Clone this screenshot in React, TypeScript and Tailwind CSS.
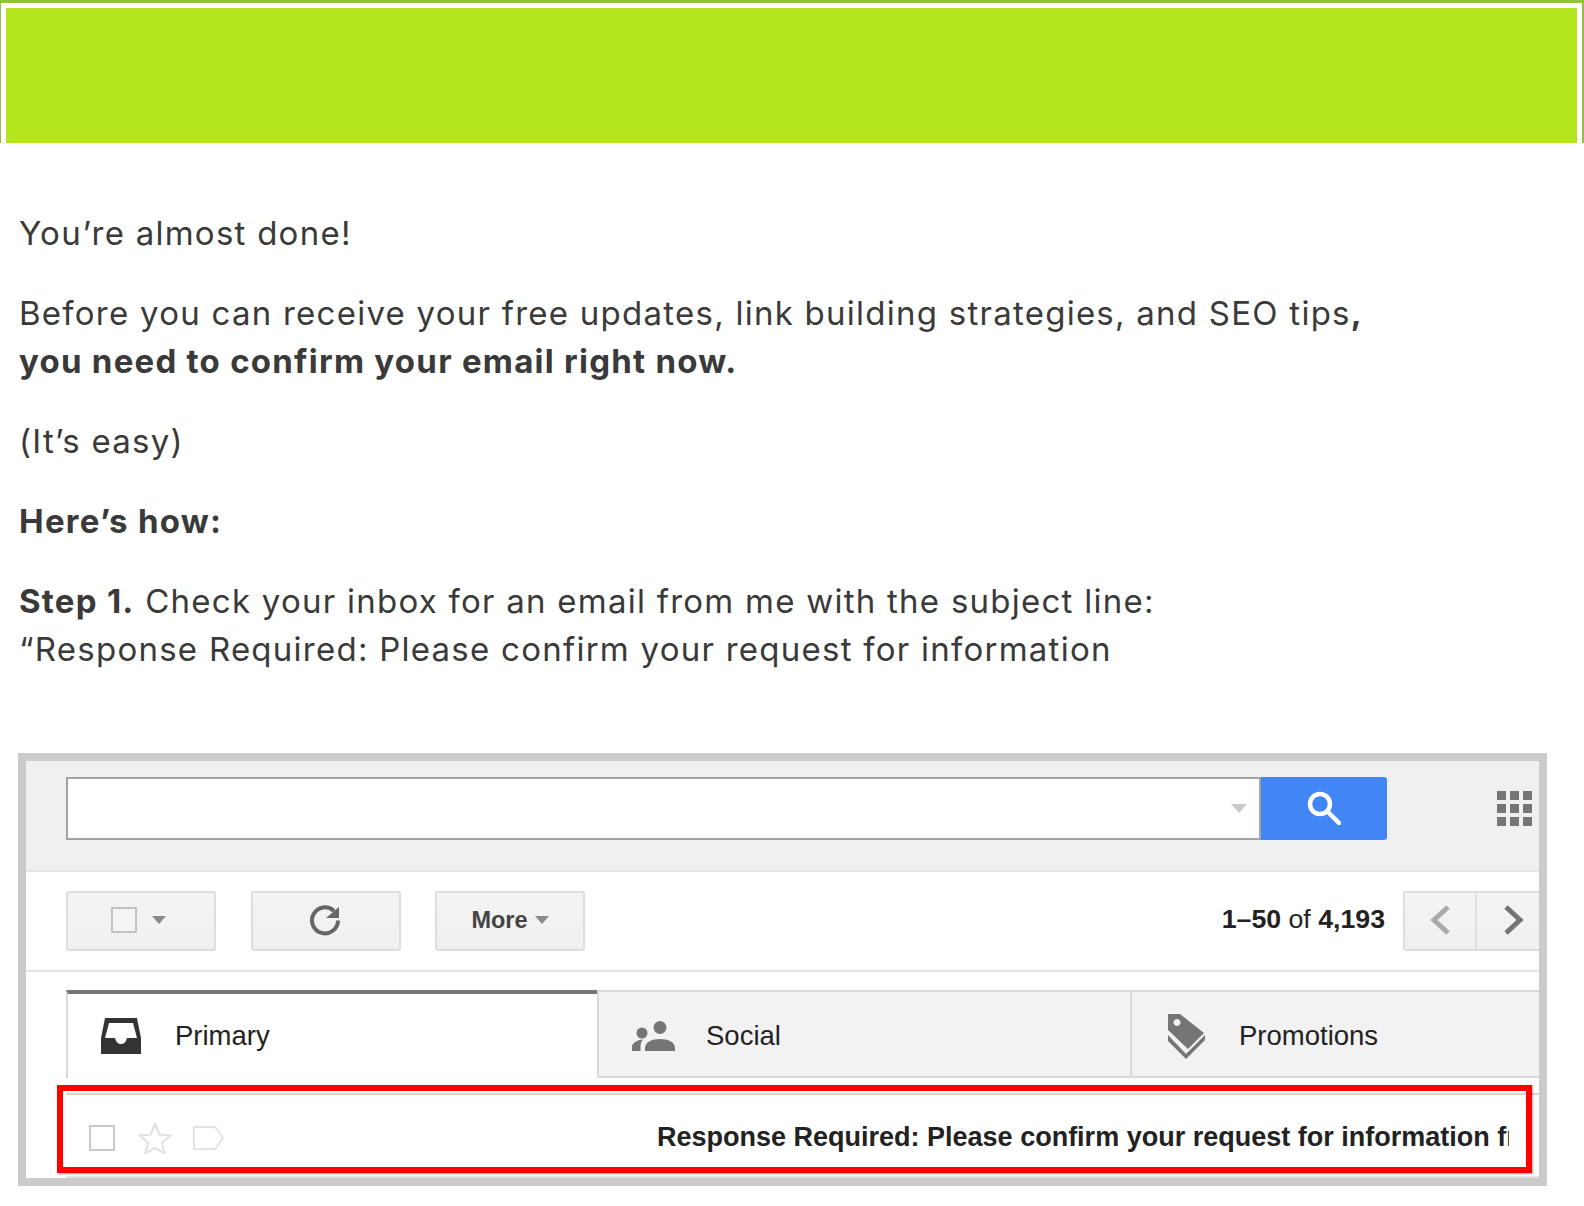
const textFont = "font-['Inter',sans-serif]";
const gmailFont = "font-['Liberation_Sans',Arial,sans-serif]";

function Caret({ className, small }: { className: string; small?: boolean }) {
  return (
    <svg className={className} width={small ? 14 : 16} height={small ? 8 : 9} viewBox="0 0 16 9">
      <path d="M0 0h16L8 9z" fill="currentColor" />
    </svg>
  );
}

function ToolButton({ children, className }: { children: React.ReactNode; className: string }) {
  return (
    <div
      className={`flex h-[60px] w-[150px] items-center justify-center rounded-[3px] border-2 border-[#dedede] bg-gradient-to-b from-[#f4f4f4] to-[#f0f0f0] ${className}`}
    >
      {children}
    </div>
  );
}

function InboxIcon() {
  return (
    <svg width="40" height="36" viewBox="0 0 40 36" className="shrink-0">
      <path
        fillRule="evenodd"
        fill="#333"
        d="M4 0h32l4 20v16H0V20zM8 5 4 20h10c1 4 3 6 6 6s5-2 6-6h10L32 5z"
      />
    </svg>
  );
}

function SocialIcon() {
  return (
    <svg width="44" height="30" viewBox="0 0 44 30" className="shrink-0" fill="#757575">
      <circle cx="28" cy="6.500" r="6.500" />
      <circle cx="10" cy="12" r="5.500" />
      <path d="M13 30v-3c0-6 7-9 15-9s15 3 15 9v3z" />
      <path d="M0 30v-4c0-4 5-7 11-7.500-1.500 2-2.500 4-2.500 7V30z" />
    </svg>
  );
}

function TagIcon() {
  return (
    <svg width="37" height="46" viewBox="0 0 37 46" className="shrink-0" fill="#757575">
      <path
        fillRule="evenodd"
        d="M0 1h12l24 19-16 16L0 17zM9 6a3.500 3.500 0 1 0 .01 0z"
      />
      <path d="M0 22v6l18 18 19-19v-5L18 41z" />
    </svg>
  );
}

function Tab({
  label,
  icon,
  className,
  gap,
}: {
  label: string;
  icon: React.ReactNode;
  className: string;
  gap: string;
}) {
  return (
    <div className={`flex h-[88px] items-center ${gap} ${className}`}>
      {icon}
      <span className="text-[27.500px] text-[#222]">{label}</span>
    </div>
  );
}

export default function App() {
  return (
    <div className="min-h-[1206px] w-[1584px] bg-white">
      {/* header banner */}
      <div className="border-t-3 border-r-2 border-l-1 border-[#8fc23f]">
        <div className="border-x-5 border-t-5 border-white">
          <div className="h-[135px] bg-[#b5e51c]" />
        </div>
      </div>

      <div className={`px-[19px] pt-[66px] text-[33px] leading-[48px] tracking-[1.25px] text-[#3a3a3a] ${textFont}`}>
        <p>You’re almost done!</p>
        <p className="mt-[32px]">
          Before you can receive your free updates, link building strategies, and SEO tips<b>,</b>
          <br />
          <b>you need to confirm your email right now.</b>
        </p>
        <p className="mt-[32px]">(It’s easy)</p>
        <p className="mt-[32px] font-bold">Here’s how:</p>
        <p className="mt-[32px]">
          <b>Step 1.</b> Check your inbox for an email from me with the subject line:
          <br />
          “Response Required: Please confirm your request for information
        </p>
      </div>

      {/* gmail screenshot */}
      <div className={`relative ml-[18px] mt-[80px] w-[1529px] border-8 border-[#cbcbcb] ${gmailFont}`}>
        <div className="flex h-[111px] items-center border-b-2 border-[#e4e4e4] bg-[#f0f0f0] pb-[15px] pl-[40px]">
          <div className="flex h-[63px] w-[1195px] items-center justify-end border-2 border-[#a3a3a3] bg-white pr-[12px]">
            <Caret className="text-[#c9c9c9]" />
          </div>
          <div className="flex h-[63px] w-[126px] items-center justify-center rounded-r-[3px] bg-[#4285f4]">
            <svg width="34" height="34" viewBox="0 0 34 34" fill="none" stroke="white" strokeWidth="4.500">
              <circle cx="13" cy="13" r="10" />
              <path d="m21 21 11 11" strokeLinecap="round" />
            </svg>
          </div>
          <div className="ml-[110px] grid grid-cols-3 gap-[4px]">
            {Array.from({ length: 9 }).map((_, i) => (
              <div key={i} className="size-[9px] bg-[#757575]" />
            ))}
          </div>
        </div>

        <div className="flex h-[100px] items-center border-b-2 border-[#e4e4e4] pl-[40px]">
          <ToolButton className="gap-[15px] pr-[6px]">
            <div className="-mt-[2px] size-[26px] border-2 border-[#c4c4c4] bg-[#f4f4f4]" />
            <Caret small className="-mt-[2px] text-[#8a8a8a]" />
          </ToolButton>
          <ToolButton className="ml-[35px] pr-[3px]">
            <svg width="32" height="32" viewBox="0 0 32 32" fill="none" className="-mt-[2px]">
              <path d="M25 7A13 13 0 1 0 29 16.500" stroke="#666" strokeWidth="4" />
              <path d="M17 14h13V3z" fill="#666" />
            </svg>
          </ToolButton>
          <ToolButton className="ml-[34px] gap-[7px]">
            <span className="text-[23.500px] font-bold text-[#444]">More</span>
            <Caret small className="-mt-[3px] text-[#8a8a8a]" />
          </ToolButton>
          <div className="-mt-[4px] ml-auto mr-[18px] text-[26.700px] text-[#222]">
            <b>1–50</b> of <b>4,193</b>
          </div>
          <div className="flex h-[60px] w-[136px] rounded-l-[3px] border-y-2 border-l-2 border-[#dedede] bg-gradient-to-b from-[#f4f4f4] to-[#f0f0f0]">
            <div className="flex w-[72px] items-center justify-center border-r-2 border-[#dedede] pb-[2px]">
              <svg width="22" height="30" viewBox="0 0 22 30" fill="none" stroke="#aaa" strokeWidth="5">
                <path d="M19 2 5 15l14 13" />
              </svg>
            </div>
            <div className="flex flex-1 items-center justify-center pb-[2px] pl-[12px]">
              <svg width="22" height="30" viewBox="0 0 22 30" fill="none" stroke="#757575" strokeWidth="5">
                <path d="m3 2 14 13L3 28" />
              </svg>
            </div>
          </div>
        </div>

        <div className="mt-[18px] flex pl-[40px]">
          <Tab
            label="Primary"
            icon={<InboxIcon />}
            gap="gap-[34px]"
            className="w-[531px] border-l-2 border-t-4 border-l-[#d9d9d9] border-t-[#757575] pl-[33px]"
          />
          <Tab
            label="Social"
            icon={<SocialIcon />}
            gap="gap-[30px]"
            className="w-[533px] border-y-2 border-l-2 border-[#d9d9d9] bg-[#f2f2f2] pl-[33px] pt-[4px]"
          />
          <Tab
            label="Promotions"
            icon={<TagIcon />}
            gap="gap-[34px]"
            className="flex-1 border-y-2 border-l-2 border-[#d9d9d9] bg-[#f2f2f2] pl-[36px] pt-[4px]"
          />
        </div>

        {/* message row */}
        <div className="ml-[40px] mt-[15px] flex h-[85px] items-center border-t-2 border-b-2 border-t-[#d4d4d4] border-b-[#e4e4e4] pl-[23px] pt-[5px]">
          <div className="size-[26px] border-2 border-[#c8c8c8]" />
          <svg width="34" height="32" viewBox="0 0 34 32" fill="none" stroke="#e0e0e0" strokeWidth="2" className="ml-[23px]">
            <path d="m17 2 4.500 10.500 11 1-8.500 7.300 2.600 10.700L17 26l-9.600 5.500L10 20.800 1.500 13.500l11-1z" />
          </svg>
          <svg width="31" height="24" viewBox="0 0 31 24" fill="none" stroke="#e4e4e4" strokeWidth="2" className="ml-[21px]">
            <path d="M1 1h21l8 11-8 11H1z" />
          </svg>
          <div className="-mt-[2px] ml-[433px] w-[852px] overflow-hidden whitespace-nowrap text-[27px] font-bold text-[#222]">
            Response Required: Please confirm your request for information from
          </div>
        </div>

        {/* red highlight laid over the row */}
        <div className="absolute left-[31px] top-[324px] h-[88px] w-[1475px] border-[6.500px] border-[#ff0000] shadow-[1px_1px_2px_rgba(0,0,0,0.35)]" />
      </div>
    </div>
  );
}
